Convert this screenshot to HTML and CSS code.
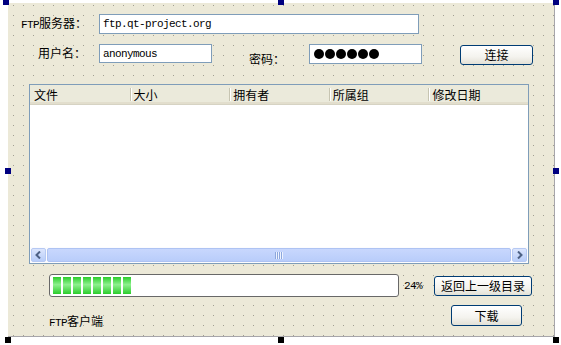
FILE: index.html
```html
<!DOCTYPE html>
<html lang="zh">
    <head>
        <meta charset="UTF-8">
        <meta name="viewport" content="width=device-width, initial-scale=1.0">
        <title>FTP客户端</title>
        <link rel="stylesheet" href="styles.css">
    </head>
    <body>
        <div class="form">
            <div class="row row-server">
                <span class="label lbl-server"><span class="latin">FTP</span>服务器：</span>
                <div class="edit edit-server">ftp.qt-project.org</div>
            </div>
            <div class="row row-login">
                <span class="label lbl-user">用户名：</span>
                <div class="edit edit-user">anonymous</div>
                <span class="label lbl-pass">密码：</span>
                <div class="edit edit-pass">
                    <span class="dot"></span><span class="dot"></span><span class="dot"></span>
                    <span class="dot"></span><span class="dot"></span><span class="dot"></span>
                </div>
                <button class="btn btn-connect">连接</button>
            </div>

            <div class="list">
                <div class="list-head">
                    <div class="col">文件</div>
                    <div class="col">大小</div>
                    <div class="col">拥有者</div>
                    <div class="col">所属组</div>
                    <div class="col">修改日期</div>
                </div>
                <div class="list-body"></div>
                <div class="hscroll">
                    <span class="sb-btn">
                        <svg width="7" height="8" viewBox="0 0 7 8"><path d="M5 0.5 L1.5 4 L5 7.5" fill="none" stroke="#4d6185" stroke-width="2"/></svg>
                    </span>
                    <span class="sb-thumb"><span class="grip"></span></span>
                    <span class="sb-btn">
                        <svg width="7" height="8" viewBox="0 0 7 8"><path d="M2 0.5 L5.5 4 L2 7.5" fill="none" stroke="#4d6185" stroke-width="2"/></svg>
                    </span>
                </div>
            </div>

            <div class="row row-progress">
                <div class="progress">
                    <span class="chunk"></span><span class="chunk"></span><span class="chunk"></span><span class="chunk"></span>
                    <span class="chunk"></span><span class="chunk"></span><span class="chunk"></span><span class="chunk"></span>
                </div>
                <span class="pct latin">24%</span>
                <button class="btn btn-up">返回上一级目录</button>
            </div>
            <div class="row row-bottom">
                <span class="label lbl-status"><span class="latin">FTP</span>客户端</span>
                <button class="btn btn-download">下载</button>
            </div>
        </div>

        <!-- selection handles of the designer -->
        <span class="handle h-tl"></span>
        <span class="handle h-tm"></span>
        <span class="handle h-tr"></span>
        <span class="handle h-ml"></span>
        <span class="handle h-mr"></span>
        <span class="handle h-bl"></span>
        <span class="handle h-bm"></span>
        <span class="handle h-br"></span>
    </body>
</html>
```

FILE: styles.css
```css
body {
    margin: 0;
    background-color: #ffffff;
    font-family: "Noto Sans CJK SC", sans-serif;
    font-size: 12px;
    color: #000;
}

.form {
    margin: 3px 0 0 8px;
    width: 547px;
    height: 334px;
    box-sizing: border-box;
    border-right: 1px solid #a7a6aa;
    border-bottom: 1px solid #a7a6aa;
    background-color: #ece9d8;
    background-image: conic-gradient(at 1px 1px, transparent 75%, #a19f93 0);
    background-size: 10px 10px;
    background-position: 5px 2px;
    display: flex;
    flex-direction: column;
}

.row {
    display: flex;
}

.label {
    line-height: 14px;
    white-space: nowrap;
}

.latin {
    font-family: "Liberation Mono", monospace;
    font-size: 11px;
    letter-spacing: -0.6px;
}

.edit {
    box-sizing: border-box;
    background: #fff;
    border: 1px solid #7f9db9;
    padding-left: 3px;
    font-family: "Liberation Mono", monospace;
    font-size: 11px;
    letter-spacing: -0.6px;
    display: flex;
    align-items: center;
}

/* row 1 */
.row-server {
    margin-top: 11px;
    height: 20px;
    align-items: center;
}
.lbl-server {
    margin-left: 13px;
    width: 78px;
}
.edit-server {
    width: 320px;
    height: 20px;
}

/* row 2 */
.row-login {
    margin-top: 10px;
    height: 21px;
    align-items: flex-start;
}
.lbl-user {
    margin-left: 30px;
    width: 61px;
    margin-top: 2px;
}
.edit-user {
    width: 113px;
    height: 19px;
}
.lbl-pass {
    margin-left: 37px;
    width: 60px;
    margin-top: 8px;
}
.edit-pass {
    width: 113px;
    height: 20px;
    padding-left: 4px;
    gap: 1px;
}
.dot {
    width: 10px;
    height: 10px;
    border-radius: 50%;
    background: #000;
}

.btn {
    box-sizing: border-box;
    border: 1px solid #003c74;
    border-radius: 3px;
    background: linear-gradient(#ffffff, #f4f3ee 60%, #e3e1d6);
    font-family: "Noto Sans CJK SC", sans-serif;
    font-size: 12px;
    line-height: 12px;
    color: #000;
    padding: 0;
}
.btn-connect {
    margin-left: 38px;
    margin-top: 1px;
    width: 73px;
    height: 20px;
}

/* list view */
.list {
    margin: 19px 0 0 21px;
    width: 500px;
    height: 180px;
    box-sizing: border-box;
    border: 1px solid #7f9db9;
    background: #fff;
    display: flex;
    flex-direction: column;
}
.list-head {
    height: 19px;
    display: flex;
    background: #ebeadb;
    border-bottom: 1px solid #d6d3c3;
    box-shadow: inset 0 -2px 0 #e2decd;
}
.col {
    width: 100px;
    box-sizing: border-box;
    padding-left: 4px;
    line-height: 19px;
}
.col + .col {
    background: linear-gradient(#c7c5b2, #c7c5b2) no-repeat 0 3px / 1px 13px,
                linear-gradient(#ffffff, #ffffff) no-repeat 1px 3px / 1px 13px;
}
.list-body {
    flex: 1;
}
.hscroll {
    height: 16px;
    display: flex;
    align-items: center;
    gap: 1px;
    padding: 0 1px;
    background: #fcfcfe;
}
.sb-btn {
    width: 15px;
    height: 14px;
    box-sizing: border-box;
    border: 1px solid #b6c9f3;
    border-radius: 2px;
    background: linear-gradient(#dbe5fd, #b8cdf9);
    display: flex;
    align-items: center;
    justify-content: center;
}
.sb-thumb {
    flex: 1;
    height: 14px;
    box-sizing: border-box;
    border: 1px solid #aec3f3;
    border-radius: 2px;
    background: linear-gradient(#c8d7fd, #b9cdfa);
    display: flex;
    align-items: center;
    justify-content: center;
}
.grip {
    width: 8px;
    height: 7px;
    background: repeating-linear-gradient(90deg, #8da7dc 0 1px, #eef3ff 1px 2px);
}

/* progress row */
.row-progress {
    margin-top: 10px;
    height: 23px;
    align-items: center;
}
.progress {
    margin-left: 41px;
    width: 350px;
    height: 23px;
    box-sizing: border-box;
    border: 1px solid #686868;
    border-radius: 3px;
    background: #fff;
    padding: 2px 3px;
    display: flex;
    gap: 2px;
}
.chunk {
    width: 8px;
    height: 17px;
    background: linear-gradient(#2bcd2b, #8ef08e 45%, #2bcd2b);
}
.pct {
    margin-left: 5px;
    width: 18px;
}
.btn-up {
    margin-left: 12px;
    width: 98px;
    height: 20px;
}

/* bottom row */
.row-bottom {
    margin-top: 8px;
    height: 21px;
    align-items: flex-start;
}
.lbl-status {
    margin-left: 41px;
    margin-top: 9px;
}
.btn-download {
    margin-left: auto;
    margin-right: 32px;
    width: 71px;
    height: 21px;
}

.handle {
    position: absolute;
    width: 6px;
    height: 6px;
    background: #000080;
}
.h-tl { left: 3px; top: -1px; }
.h-tm { left: 278px; top: -1px; }
.h-tr { left: 553px; top: -1px; }
.h-ml { left: 5px; top: 168px; }
.h-mr { left: 553px; top: 168px; }
.h-bl { left: 5px; top: 337px; background: #000; }
.h-bm { left: 278px; top: 337px; background: #000; }
.h-br { left: 553px; top: 337px; background: #000; }
```
